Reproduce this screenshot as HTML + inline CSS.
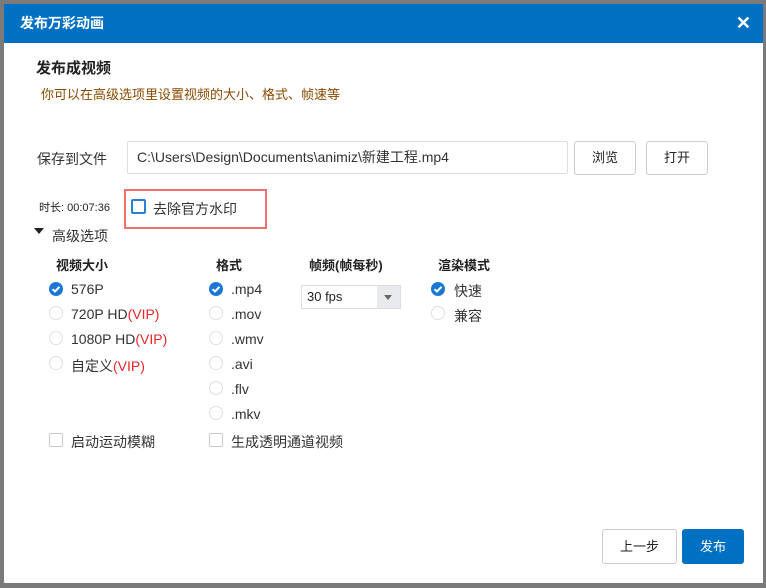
<!DOCTYPE html>
<html><head><meta charset="utf-8"><style>
*{margin:0;padding:0;box-sizing:border-box}
body{width:766px;height:588px;background:#7a7a7a;position:relative;overflow:hidden;font-family:"Liberation Sans","Noto Sans CJK SC",sans-serif;color:#333}
.dlg{position:absolute;left:4px;top:4px;width:759px;height:579px;background:#fff}
.tb{position:absolute;left:0;top:0;width:100%;height:39px;background:#0070c3;color:#fff;font-weight:bold;font-size:14px;line-height:39px;padding-left:16px}
.x{position:absolute;right:12px;top:0;font-size:18px;font-weight:bold}
.a{position:absolute;white-space:nowrap}
.btn{position:absolute;border:1px solid #ccc;border-radius:3px;background:#fff;text-align:center;font-size:13px;color:#222}
.r{position:absolute;width:14px;height:14px;border-radius:50%;border:1px solid #dde0e4;background:#fff}
.rc{position:absolute;width:14px;height:14px;border-radius:50%;background:#1a78d4}
.rc svg{position:absolute;left:2px;top:2px}
.cb{position:absolute;width:14px;height:14px;border:1px solid #ccc;border-radius:2px;background:#fff}
.t{font-size:14px;color:#333}
.v{color:#e8262b}
.h{font-size:13px;font-weight:bold;color:#222}
</style></head><body>
<div class="dlg">
<div class="tb">发布万彩动画<span class="x">✕</span></div>
<div class="a" style="left:32px;top:53px;font-size:15px;font-weight:bold;color:#222">发布成视频</div>
<div class="a" style="left:37px;top:80px;font-size:13px;color:#8a4a00">你可以在高级选项里设置视频的大小、格式、帧速等</div>
<div class="a t" style="left:33px;top:145px">保存到文件</div>
<div class="a" style="left:123px;top:137px;width:441px;height:33px;border:1px solid #ddd;border-radius:2px;font-size:14px;line-height:31px;padding-left:9px;color:#333">C:\Users\Design\Documents\animiz\新建工程.mp4</div>
<div class="btn" style="left:570px;top:137px;width:62px;height:34px;line-height:32px">浏览</div>
<div class="btn" style="left:642px;top:137px;width:62px;height:34px;line-height:32px">打开</div>
<div class="a" style="left:35px;top:195px;font-size:11px;color:#222">时长: 00:07:36</div>
<div class="a" style="left:120px;top:185px;width:143px;height:40px;border:2px solid #f07070"></div>
<div class="a" style="left:127px;top:195px;width:15px;height:15px;border:2px solid #2a7fd4;border-radius:2px"></div>
<div class="a t" style="left:149px;top:195px">去除官方水印</div>
<div class="a" style="left:30px;top:224px;width:0;height:0;border-left:5px solid transparent;border-right:5px solid transparent;border-top:6px solid #222"></div>
<div class="a t" style="left:48px;top:222px">高级选项</div>
<div class="a h" style="left:52px;top:251px">视频大小</div>
<div class="a h" style="left:212px;top:251px">格式</div>
<div class="a h" style="left:305px;top:251px">帧频(帧每秒)</div>
<div class="a h" style="left:434px;top:251px">渲染模式</div>

<div class="rc" style="left:45px;top:278px"><svg width="10" height="10" viewBox="0 0 10 10"><path d="M1.5 5.2 L4 7.5 L8.5 2.8" stroke="#fff" stroke-width="2" fill="none"/></svg></div>
<div class="a t" style="left:67px;top:277px">576P</div>
<div class="r" style="left:45px;top:302px"></div><div class="a t" style="left:67px;top:302px">720P HD<span class="v">(VIP)</span></div>
<div class="r" style="left:45px;top:327px"></div><div class="a t" style="left:67px;top:327px">1080P HD<span class="v">(VIP)</span></div>
<div class="r" style="left:45px;top:352px"></div><div class="a t" style="left:67px;top:352px">自定义<span class="v">(VIP)</span></div>

<div class="rc" style="left:205px;top:278px"><svg width="10" height="10" viewBox="0 0 10 10"><path d="M1.5 5.2 L4 7.5 L8.5 2.8" stroke="#fff" stroke-width="2" fill="none"/></svg></div>
<div class="a t" style="left:227px;top:277px">.mp4</div>
<div class="r" style="left:205px;top:302px"></div><div class="a t" style="left:227px;top:302px">.mov</div>
<div class="r" style="left:205px;top:327px"></div><div class="a t" style="left:227px;top:327px">.wmv</div>
<div class="r" style="left:205px;top:352px"></div><div class="a t" style="left:227px;top:352px">.avi</div>
<div class="r" style="left:205px;top:377px"></div><div class="a t" style="left:227px;top:377px">.flv</div>
<div class="r" style="left:205px;top:402px"></div><div class="a t" style="left:227px;top:402px">.mkv</div>

<div class="a" style="left:297px;top:281px;width:100px;height:24px;border:1px solid #ddd;font-size:13px;line-height:22px;padding-left:5px;color:#222">30 fps</div>
<div class="a" style="left:373px;top:282px;width:23px;height:22px;background:#e8eaee"></div>
<div class="a" style="left:380px;top:291px;width:0;height:0;border-left:4px solid transparent;border-right:4px solid transparent;border-top:5px solid #666"></div>

<div class="rc" style="left:427px;top:278px"><svg width="10" height="10" viewBox="0 0 10 10"><path d="M1.5 5.2 L4 7.5 L8.5 2.8" stroke="#fff" stroke-width="2" fill="none"/></svg></div>
<div class="a t" style="left:450px;top:277px">快速</div>
<div class="r" style="left:427px;top:302px"></div><div class="a t" style="left:450px;top:302px">兼容</div>

<div class="cb" style="left:45px;top:429px"></div><div class="a t" style="left:67px;top:428px">启动运动模糊</div>
<div class="cb" style="left:205px;top:429px"></div><div class="a t" style="left:227px;top:428px">生成透明通道视频</div>

<div class="btn" style="left:598px;top:525px;width:75px;height:35px;line-height:33px">上一步</div>
<div class="btn" style="left:678px;top:525px;width:62px;height:35px;line-height:33px;background:#0070c3;border-color:#0070c3;color:#fff">发布</div>
</div>
</body></html>
